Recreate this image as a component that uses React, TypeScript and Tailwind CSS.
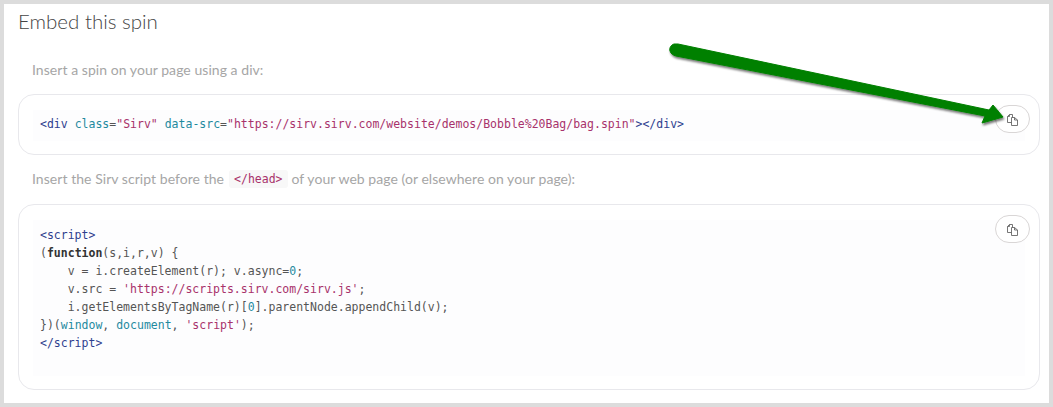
const codeLine = "whitespace-pre font-['DejaVu_Sans_Mono',monospace] text-[11.5px] leading-[18px] text-[#555]";
const tag = "text-[#2f3f8f]";
const attr = "text-[#1f8a9e]";
const str = "text-[#a8326b]";
const kw = "text-[#333] font-bold";

function CopyButton() {
  return (
    <button className="absolute right-[9px] top-[10px] flex h-[28px] w-[35px] items-center justify-center rounded-full border border-[#d9d6d6] bg-white">
      <svg width="13" height="13" viewBox="0 0 13 13" fill="none" stroke="#666" strokeWidth="0.9">
        <path d="M5.5 9.5H1.5V3.5L3.5 1.5H6.5V4.5M3.5 1.5V3.5H1.5" />
        <path d="M5.5 4.5H8.5L11.5 7V12.5H5.5ZM8.5 4.5V7H11.5" />
      </svg>
    </button>
  );
}

export default function App() {
  return (
    <div className="relative h-[407px] w-[1053px] overflow-hidden border-4 border-[#dcdcdc] bg-white font-['Lato',sans-serif]">
      <div className="pl-[14px] pr-[9px]">
        <h2 className="h-[34px] pt-[3px] text-[20.5px] leading-[28px] font-light text-[#444]">Embed this spin</h2>
        <p className="mt-[23px] h-[18px] pl-[14px] text-[14px] leading-[18px] tracking-[0.05px] text-[#a6a6a6]">
          Insert a spin on your page using a div:
        </p>
        <div className="relative mt-[15px] h-[61px] rounded-[16px] border border-[#e8e8ec] px-[14px] py-[15px]">
          <div className="h-[31px] bg-[#fdfdfe] px-[7px] pt-[5px]">
            <div className={codeLine}>
              <span className={tag}>&lt;div</span> <span className={attr}>class</span>=<span className={str}>"Sirv"</span>{" "}
              <span className={attr}>data-src</span>=<span className={str}>"https://sirv.sirv.com/website/demos/Bobble%20Bag/bag.spin"</span>
              <span className={tag}>&gt;&lt;/div&gt;</span>
            </div>
          </div>
          <CopyButton />
        </div>
        <p className="mt-[15px] flex h-[18px] items-center pl-[14px] text-[14px] leading-[18px] tracking-[0.05px] text-[#a6a6a6]">
          Insert the Sirv script before the
          <code className="ml-[5px] mr-[4px] rounded-[3px] bg-[#f8f8f8] px-[5px] font-['DejaVu_Sans_Mono',monospace] text-[11.5px] leading-[18px] tracking-normal text-[#a8326b]">
            &lt;/head&gt;
          </code>
          of your web page (or elsewhere on your page):
        </p>
        <div className="relative mt-[16px] h-[186px] rounded-[16px] border border-[#e8e8ec] px-[14px] py-[15px]">
          <div className="h-[156px] bg-[#fdfdfe] px-[7px] pt-[6px]">
            <div className={codeLine}><span className={tag}>&lt;script&gt;</span></div>
            <div className={codeLine}>(<span className={kw}>function</span>(s,i,r,v) {"{"}</div>
            <div className={codeLine}>{"    v = i.createElement(r); v.async="}<span className={attr}>0</span>;</div>
            <div className={codeLine}>{"    v.src = "}<span className={str}>'https://scripts.sirv.com/sirv.js'</span>;</div>
            <div className={codeLine}>{"    i.getElementsByTagName(r)["}<span className={attr}>0</span>].parentNode.appendChild(v);</div>
            <div className={codeLine}>{"})("}<span className={attr}>window</span>, <span className={attr}>document</span>, <span className={str}>'script'</span>);</div>
            <div className={codeLine}><span className={tag}>&lt;/script&gt;</span></div>
          </div>
          <CopyButton />
        </div>
      </div>
      {/* green annotation arrow */}
      <svg className="absolute left-[-4px] top-[-4px]" width="1053" height="407" viewBox="0 0 1053 407">
        <defs>
          <filter id="arrowShadow" x="-5%" y="-20%" width="110%" height="150%">
            <feDropShadow dx="1" dy="2" stdDeviation="1.2" floodColor="#000" floodOpacity="0.55" />
          </filter>
        </defs>
        <path
          d="M674 44 C671 45 669 48 670 51 C671 54 673 55 676 56 L985 116 L982 123 L1003 117 L993 105 L989 110 L678 44 Z"
          fill="#008000"
          stroke="#008000"
          strokeWidth="1"
          strokeLinejoin="round"
          filter="url(#arrowShadow)"
        />
      </svg>
    </div>
  );
}
